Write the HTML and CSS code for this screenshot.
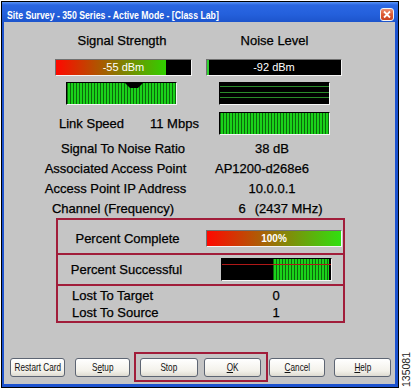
FILE: index.html
```html
<!DOCTYPE html>
<html lang="en">
<head>
  <meta charset="UTF-8" />
  <title>Site Survey</title>
  <link rel="stylesheet" href="styles.css">
</head>
<body>
  <div class="screen">
    <div class="window">
      <div class="titlebar">
        <span class="title">Site Survey - 350 Series - Active Mode - [Class Lab]</span>
        <span class="close">
          <svg width="12" height="11" viewBox="0 0 12 11">
            <path d="M3 2.5 L9 8.5 M9 2.5 L3 8.5" stroke="#fff" stroke-width="1.8" fill="none" />
          </svg>
        </span>
      </div>

      <div class="content">
        <div class="headings">
          <div>Signal Strength</div>
          <div>Noise Level</div>
        </div>

        <div class="bars">
          <div class="bar bar-signal">-55 dBm</div>
          <div class="bar bar-noise">-92 dBm</div>
        </div>

        <div class="graphs">
          <div class="graph graph-green"><span class="marker"></span></div>
          <div class="graph graph-noise"></div>
        </div>

        <div class="link-row">
          <span class="link-label">Link Speed</span>
          <span class="link-value">11 Mbps</span>
          <div class="graph graph-green"></div>
        </div>

        <div class="stats">
          <div class="stat-label snr">Signal To Noise Ratio</div>
          <div class="stat-value">38 dB</div>
          <div class="stat-label">Associated Access Point</div>
          <div class="stat-value ap">AP1200-d268e6</div>
          <div class="stat-label">Access Point IP Address</div>
          <div class="stat-value">10.0.0.1</div>
          <div class="stat-label channel">Channel (Frequency)</div>
          <div class="stat-value freq"><span class="chan-num">6</span>(2437 MHz)</div>
        </div>

        <div class="progress-box">
          <div class="section section-complete">
            <span class="section-label">Percent Complete</span>
            <div class="bar bar-progress">100%</div>
          </div>
          <div class="section section-success">
            <span class="section-label">Percent Successful</span>
            <div class="graph graph-success"><div class="success-fill"></div></div>
          </div>
          <div class="section section-lost">
            <span class="lost-label">Lost To Target</span>
            <span class="lost-value">0</span>
            <span class="lost-label">Lost To Source</span>
            <span class="lost-value">1</span>
          </div>
        </div>

        <div class="buttons">
          <button class="btn btn-restart"><span>Restart Card</span></button>
          <button class="btn btn-setup"><span>S<u>e</u>tup</span></button>
          <div class="btn-group">
            <button class="btn btn-stop"><span>Stop</span></button>
            <button class="btn btn-ok"><span><u>O</u>K</span></button>
          </div>
          <button class="btn btn-cancel"><span><u>C</u>ancel</span></button>
          <button class="btn btn-help"><span><u>H</u>elp</span></button>
        </div>
      </div>
    </div>

    <div class="side">
      <span class="fig-num">135081</span>
    </div>
  </div>
</body>
</html>
```

FILE: styles.css
```css
body {
  margin: 0;
  background: #fff;
  font-family: "Liberation Sans", Arial, sans-serif;
  color: #000;
}

.screen {
  display: flex;
  height: 392px;
}

/* window chrome */

.window {
  margin: 1px 0 0 1px;
  width: 398px;
  height: 387px;
  box-sizing: border-box;
  border: 1px solid #000;
  background: #1c52cf;
  display: flex;
  flex-direction: column;
}

.titlebar {
  height: 20px;
  display: flex;
  align-items: flex-start;
  background: linear-gradient(#5a94f7, #2a66e2 3px, #2460dc 60%, #1d54cc);
  color: #fff;
}

.title {
  display: inline-block;
  white-space: nowrap;
  font-size: 10.5px;
  font-weight: bold;
  line-height: 12px;
  margin: 7px 0 0 5px;
  transform: scaleX(0.83);
  transform-origin: left center;
}

.close {
  margin: 6px 4px 0 auto;
  width: 14px;
  height: 13px;
  box-sizing: border-box;
  border: 1px solid #f4f4f4;
  border-radius: 3px;
  background: linear-gradient(#ec8f6e, #dc5a35 50%, #c8421f);
  display: flex;
  align-items: center;
  justify-content: center;
}

.content {
  flex: 1;
  margin: 0 3px 3px 2px;
  background: #c5c5c5;
  font-size: 13px;
  -webkit-text-stroke: 0.25px #000;
}

/* signal / noise */

.headings {
  display: grid;
  grid-template-columns: 152px 153px;
  padding: 11px 0 0 42px;
  line-height: 16px;
  text-align: center;
}

.bars {
  display: flex;
  gap: 14px;
  margin: 10px 0 0 51px;
}

.bar {
  height: 17px;
  box-sizing: border-box;
  border: 1px solid;
  border-color: #707070 #f4f4f4 #f4f4f4 #707070;
  color: #fff;
  font-size: 11px;
  line-height: 15px;
  text-align: center;
  -webkit-text-stroke: 0;
}

.bar-signal {
  width: 137px;
  background: linear-gradient(to right, #ff0800, #30d000 110px, #000 110px);
}

.bar-noise {
  width: 136px;
  background: linear-gradient(to right, #2fd02f 0 2px, #000 2px);
}

.graphs {
  display: flex;
  gap: 42px;
  margin: 6px 0 0 62px;
}

.graph {
  position: relative;
  width: 111px;
  height: 23px;
  box-sizing: border-box;
  border: 1px solid;
  border-color: #000 #f6f6f6 #f6f6f6 #000;
}

.graph-green {
  background: repeating-linear-gradient(to right, #0b6a0b 0 1px, #1ad21a 1px 3px);
}

.graph-noise {
  background:
    linear-gradient(#000 3px, #2a8a2a 3px 4px, #000 4px 9px, #2a8a2a 9px 10px, #000 10px 14px, #2a8a2a 14px 15px, #000 15px);
}

.marker {
  position: absolute;
  left: 58px;
  top: 0;
  width: 18px;
  height: 5px;
  background: #000;
  clip-path: polygon(0 0, 100% 0, 72% 100%, 28% 100%);
}

.link-row {
  display: flex;
  align-items: center;
  margin: 7px 0 0 55px;
}

.link-label {
  width: 91px;
}

.link-value {
  width: 69px;
}

/* statistics */

.stats {
  display: grid;
  grid-template-columns: 151px 162px;
  margin: 4px 0 0 36px;
  line-height: 20px;
  text-align: center;
}

.snr {
  padding-left: 15px;
}

.channel {
  padding-right: 5px;
}

.ap {
  padding-right: 20px;
}

.freq {
  padding-left: 17px;
}

.chan-num {
  margin-right: 9px;
}

.progress-box {
  width: 289px;
  box-sizing: border-box;
  border: 2px solid #a11d3a;
  margin: -1px 0 0 52px;
}

.section {
  display: flex;
  align-items: center;
}

.section + .section {
  border-top: 2px solid #a11d3a;
}

.section-complete {
  height: 29px;
  padding-top: 4px;
}

.section-complete .section-label {
  width: 139px;
  text-align: center;
}

.bar-progress {
  width: 136px;
  margin-left: 9px;
  background: linear-gradient(to right, #ff0800, #30e010);
  font-size: 10px;
  font-weight: bold;
}

.section-success {
  height: 29px;
}

.section-success .section-label {
  width: 137px;
  text-align: center;
}

.graph-success {
  margin-left: 26px;
  background: #000;
  display: flex;
  justify-content: flex-end;
}

.graph-success::after {
  content: "";
  position: absolute;
  left: 0;
  right: 0;
  top: 5px;
  height: 1px;
  background: #b01818;
}

.success-fill {
  width: 56px;
  margin-right: 2px;
  background: repeating-linear-gradient(to right, #0b6a0b 0 1px, #1ad21a 1px 3px);
}

.section-lost {
  display: grid;
  grid-template-columns: 180px 76px;
  height: 34px;
  padding-top: 1px;
  line-height: 17px;
}

.lost-label {
  padding-left: 14px;
}

.lost-value {
  text-align: center;
}

/* buttons */

.buttons {
  display: flex;
  align-items: center;
  height: 30px;
  margin-top: 29px;
  padding-left: 6px;
  -webkit-text-stroke: 0;
}

.btn {
  height: 19px;
  padding: 0;
  box-sizing: border-box;
  border: 1px solid #5d6573;
  border-radius: 3px;
  background: linear-gradient(#ffffff, #f3f1ea 70%, #dedbd1);
  font-family: "Liberation Sans", Arial, sans-serif;
  font-size: 10.5px;
  color: #111;
  white-space: nowrap;
  overflow: hidden;
  display: flex;
  align-items: center;
  justify-content: center;
}

.btn span {
  display: inline-block;
  margin: 0 -10px;
  transform: scaleX(0.78);
}

.btn-restart { width: 55px; }
.btn-setup { width: 55px; margin-left: 10px; }
.btn-stop { width: 58px; }
.btn-ok { width: 57px; margin-left: 6px; }
.btn-cancel { width: 56px; margin-left: 1px; }
.btn-help { width: 57px; margin-left: 9px; }

.btn-group {
  display: flex;
  align-items: center;
  height: 30px;
  width: 134px;
  box-sizing: border-box;
  margin-left: 4px;
  padding-left: 4px;
  border: 2px solid #a11d3a;
}

/* figure number strip */

.side {
  flex: 1;
  display: flex;
  flex-direction: column;
  justify-content: flex-end;
  align-items: center;
  padding-bottom: 5px;
}

.fig-num {
  writing-mode: vertical-rl;
  transform: rotate(180deg);
  font-size: 10.5px;
  line-height: 11px;
  color: #222;
}
```
